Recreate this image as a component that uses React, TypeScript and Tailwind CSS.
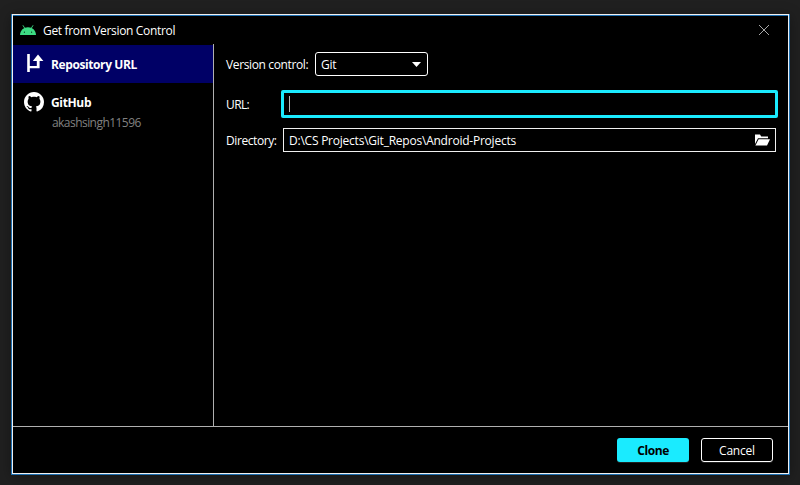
import React from "react";

function AndroidIcon() {
  return (
    <svg width="16" height="11" viewBox="0 0 16 11" className="block shrink-0">
      <path d="M3.1 .6 4.9 3.5M12.9 .6 11.1 3.5" stroke="#3ddc84" strokeWidth=".9" strokeLinecap="round" />
      <path d="M0 10C.3 5.2 3.6 2.200 8 2.200s7.700 3 8 7.800Z" fill="#3ddc84" />
      <circle cx="4.400" cy="7.200" r=".6" fill="#0b2a18" />
      <circle cx="11.600" cy="7.200" r=".6" fill="#0b2a18" />
    </svg>
  );
}

function BranchIcon() {
  return (
    <svg width="17" height="20" viewBox="0 0 17 20" className="block shrink-0">
      <path d="M.2 0h2.600v12h7V7H5.800L11 .6 16.400 7H12.600v7.300H2.800V18H.2Z" fill="#fff" />
    </svg>
  );
}

function GitHubIcon() {
  return (
    <svg width="20" height="20" viewBox="0 0 16 16" className="block shrink-0" fill="#fff">
      <path d="M8 0C3.58 0 0 3.58 0 8c0 3.54 2.29 6.53 5.47 7.59.4.07.55-.17.55-.38 0-.19-.01-.82-.01-1.49-2.01.37-2.53-.49-2.69-.94-.09-.23-.48-.94-.82-1.13-.28-.15-.68-.52-.01-.53.63-.01 1.08.58 1.23.82.72 1.21 1.87.87 2.33.66.07-.52.28-.87.51-1.07-1.78-.2-3.64-.89-3.64-3.95 0-.87.31-1.59.82-2.15-.08-.2-.36-1.02.08-2.12 0 0 .67-.21 2.2.82.64-.18 1.32-.27 2-.27s1.36.09 2 .27c1.53-1.04 2.2-.82 2.2-.82.44 1.1.16 1.92.08 2.12.51.56.82 1.27.82 2.15 0 3.07-1.87 3.75-3.65 3.95.29.25.54.73.54 1.48 0 1.07-.01 1.93-.01 2.2 0 .21.15.46.55.38A8.01 8.01 0 0 0 16 8c0-4.42-3.58-8-8-8Z" />
    </svg>
  );
}

function FolderIcon() {
  return (
    <svg width="15" height="12" viewBox="0 0 15 12" className="block shrink-0" fill="#fff">
      <path d="M0 .5h5l1.200 2H13v1.800H3L0 10Z" />
      <path d="M3.600 5.300H15l-3 6.200H.4Z" />
    </svg>
  );
}

export default function App() {
  return (
    <div className="h-[485px] w-[800px] overflow-hidden bg-[#202020] pl-[11px] pt-[14px] font-['Open_Sans','Noto_Sans',sans-serif] text-[12px] leading-4 text-white">
      <div className="h-[461px] w-[779px] border-x border-b border-[#1d70b3] shadow-[0_2px_12px_rgba(0,0,0,0.35)]">
        <div className="flex h-[460px] flex-col border border-[#f0f0f0] bg-black">
          <header className="flex h-[29px] shrink-0 items-center border-t border-[#1d70b3] pl-[7px] pr-[18px]">
            <AndroidIcon />
            <span className="ml-[7px] pt-0.5 tracking-[-0.33px]">Get from Version Control</span>
            <svg width="12" height="12" viewBox="0 0 12 12" className="ml-auto block">
              <path d="M1 1l10 10M11 1 1 11" stroke="#a8a8a8" strokeWidth="1" />
            </svg>
          </header>
          <main className="flex h-[382px] shrink-0">
            <nav className="w-[201px] shrink-0 border-r border-[#b0b0b0] pt-px">
              <div className="flex h-[38px] items-center bg-[#000066] pl-[14px] font-bold">
                <BranchIcon />
                <span className="ml-[7px] pt-0.5 tracking-[-0.4px]">Repository URL</span>
              </div>
              <div className="flex pl-[11px] pt-[9px]">
                <GitHubIcon />
                <div className="ml-[7px] pt-[3px]">
                  <div className="font-bold tracking-[-0.35px]">GitHub</div>
                  <div className="ml-px mt-[4px] tracking-[-0.55px] text-[#808080]">akashsingh11596</div>
                </div>
              </div>
            </nav>
            <section className="flex min-w-0 flex-1 flex-col pl-[12px] pr-[10px] pt-[8px]">
              <div className="flex h-6 items-center">
                <span className="w-[89px] whitespace-nowrap pt-0.5 tracking-[-0.37px]">Version control:</span>
                <div className="flex h-6 w-[113px] items-center justify-between rounded-[3px] border border-white pl-[5px] pr-[6px]">
                  <span className="pt-0.5 tracking-[-0.2px]">Git</span>
                  <svg width="9" height="5" viewBox="0 0 9 5" fill="#fff"><path d="M0 0h9L4.500 5Z" /></svg>
                </div>
              </div>
              <div className="mt-[14px] flex h-7 items-center">
                <span className="w-[55px] pt-0.5 tracking-[-0.6px]">URL:</span>
                <div className="flex h-7 flex-1 items-center rounded-[2px] border-[3px] border-[#1aebff] pl-[5px]">
                  <div className="h-4 w-px bg-[#b8b8b8]" />
                </div>
              </div>
              <div className="mt-[10px] flex h-6 items-center pr-[2px]">
                <span className="w-[57px] pt-0.5 tracking-[-0.42px]">Directory:</span>
                <div className="flex h-6 flex-1 items-center justify-between border border-[#f0f0f0] pl-[5px] pr-[5px]">
                  <span className="pt-0.5 tracking-[-0.23px]">D:\CS Projects\Git_Repos\Android-Projects</span>
                  <FolderIcon />
                </div>
              </div>
            </section>
          </main>
          <footer className="flex flex-1 items-start justify-end gap-3 border-t border-[#b0b0b0] pr-[15px] pt-[11px]">
            <button className="h-6 w-[72px] rounded-[3px] bg-[#1aebff] pt-0.5 font-bold tracking-[-0.4px] text-black shadow-[0_1px_0_#202020]">Clone</button>
            <button className="h-6 w-[72px] rounded-[3px] border border-white pt-0.5 tracking-[-0.2px] shadow-[0_1px_0_#202020]">Cancel</button>
          </footer>
        </div>
      </div>
    </div>
  );
}
